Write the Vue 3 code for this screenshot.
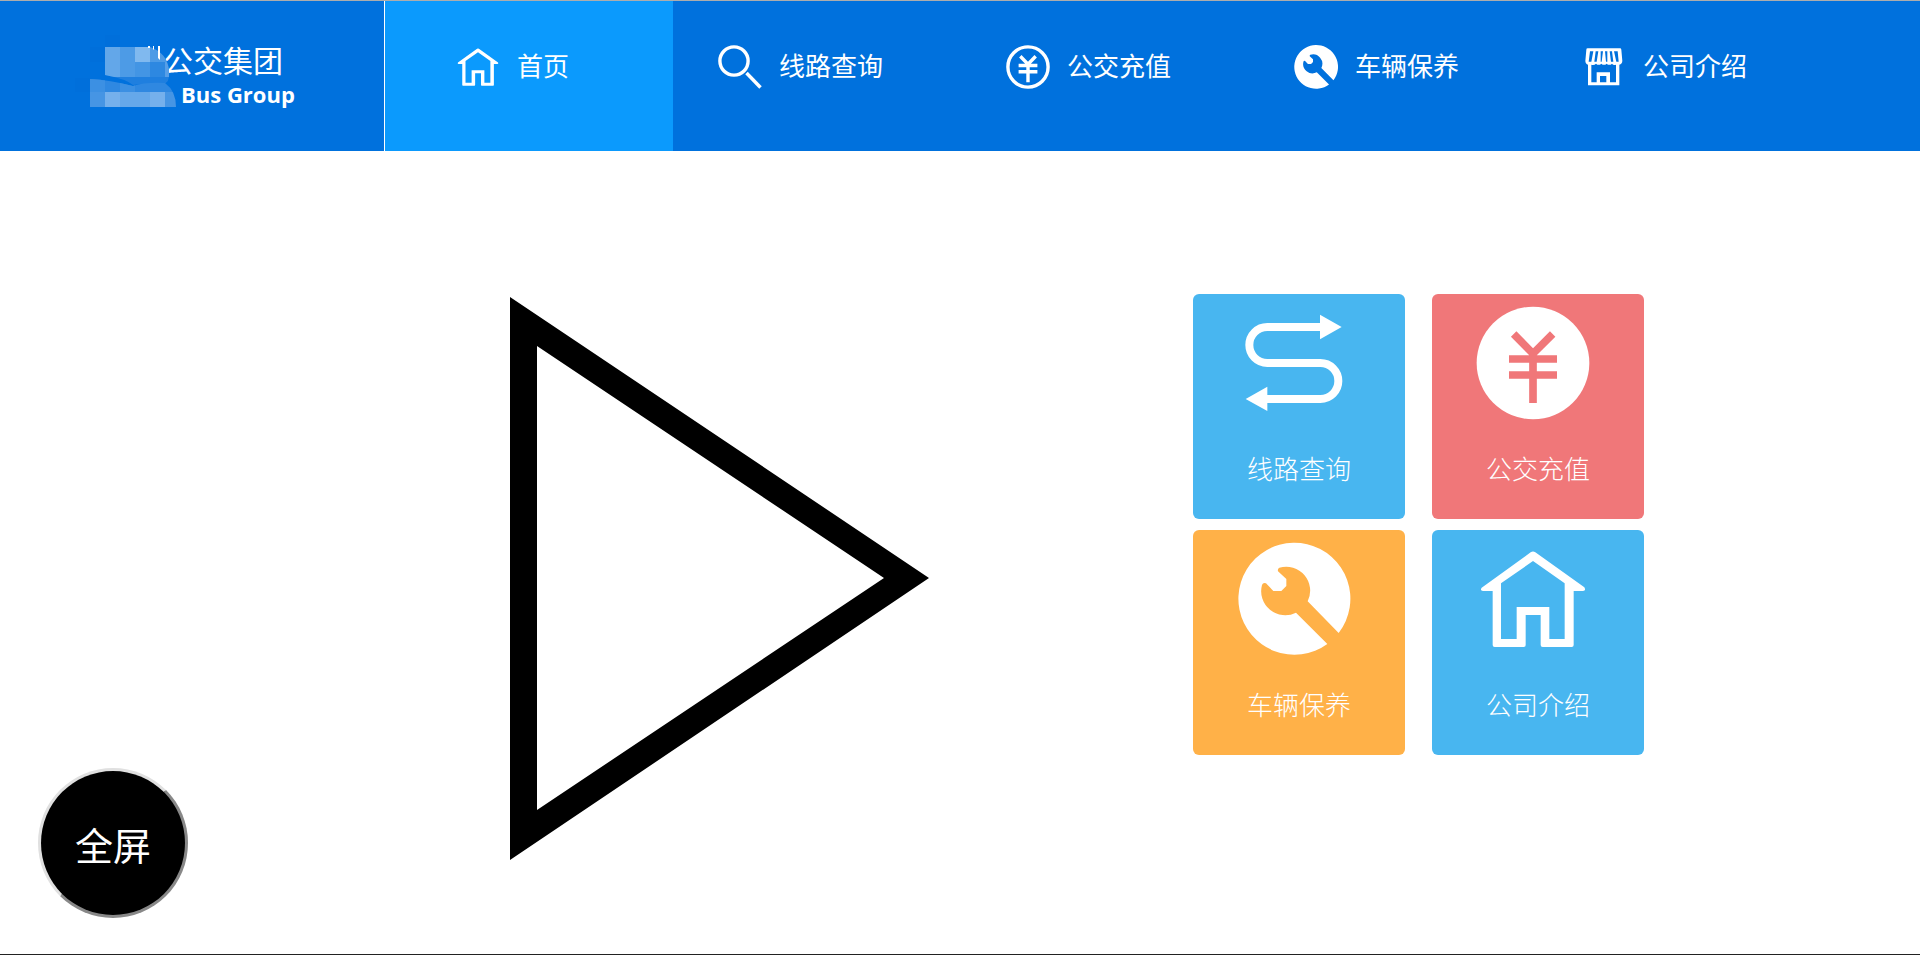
<script setup>
import { ref } from 'vue'

const active = ref('home')

const navItems = [
  { id: 'home', label: '首页' },
  { id: 'search', label: '线路查询' },
  { id: 'pay', label: '公交充值' },
  { id: 'repair', label: '车辆保养' },
  { id: 'company', label: '公司介绍' },
]

const cards = [
  { id: 'route', label: '线路查询', tone: 'blue' },
  { id: 'pay', label: '公交充值', tone: 'red' },
  { id: 'repair', label: '车辆保养', tone: 'orange' },
  { id: 'home', label: '公司介绍', tone: 'blue' },
]

const housePath =
  'M362 97Q369 92 376 97L523 202Q529 212 519 213H491V375Q491 381 485 381H398Q392 381 392 375V285H347V375Q347 381 341 381H254Q248 381 248 375V213H219Q209 212 215 203ZM369 123L273 190V357H320V261H418V357H464V190Z'
const wrenchPath =
  'M477 339A168 168 0 1 0 443 372L349 278A72 72 0 0 1 247 195Q250 187 259 190L281 213H305L320 198V177L295 154Q293 146 299 143A72 72 0 0 1 384 244Z'

function toggleFullscreen() {
  if (document.fullscreenElement) document.exitFullscreen()
  else document.documentElement.requestFullscreen()
}
</script>

<template>
  <div class="page">
    <header class="header">
      <div class="brand">
        <span class="brand-cn">公交集团</span>
        <span class="brand-en">Bus Group</span>
        <svg class="brand-mark" viewBox="75 35 105 75" aria-hidden="true">
          <defs>
            <clipPath id="mark-top">
              <path d="M105 47H150Q167 53 169 70V77Q168 85 158 85Q145 83 133 85Q126 79 105 75Z" />
            </clipPath>
            <clipPath id="mark-bottom">
              <path d="M90 79Q110 80 133 86Q145 82 165 83Q176 91 176 107H90Z" />
            </clipPath>
          </defs>
          <g fill="#006fdb">
            <path d="M105 35h15v12h-15zM90 47h15v15H90zM75 78h15v14H75z" />
          </g>
          <g clip-path="url(#mark-top)">
            <path fill="#1f7fdf" d="M105 47h66v40h-66z" />
            <path fill="#63a7e9" d="M105 47h15v30h-15z" />
            <path fill="#4d9be6" d="M120 47h15v30h-15zM150 47h20v15h-20z" />
            <path fill="#80b9ef" d="M135 47h15v15h-15z" />
            <path fill="#4395e4" d="M135 62h15v15h-15z" />
            <path fill="#2d88e1" d="M150 62h15v15h-15z" />
            <path fill="#589fe7" d="M165 62h5v15h-5z" />
          </g>
          <g clip-path="url(#mark-bottom)">
            <path fill="#2f88e1" d="M90 79h86v13H90z" />
            <path fill="#3c90e3" d="M90 79h15v13H90zM120 79h15v13h-15z" />
            <path fill="#4695e4" d="M90 92h15v15H90zM165 92h12v15h-12z" />
            <path fill="#75b0ec" d="M105 92h15v15h-15zM150 92h15v15h-15z" />
            <path fill="#65a8ea" d="M120 92h30v15h-30z" />
          </g>
          <path fill="#fff" d="M158 46h2v14l-2-2zM148 46h2v2h-2zM153 46h1v4l-1-1z" />
        </svg>
      </div>

      <nav class="nav">
        <a
          v-for="item in navItems"
          :key="item.id"
          href="#"
          class="nav-item"
          :class="{ active: active === item.id }"
          @click.prevent="active = item.id"
        >
          <svg v-if="item.id === 'home'" class="nav-icon" viewBox="177 45 384 384" aria-hidden="true">
            <path fill="currentColor" fill-rule="evenodd" :d="housePath" />
          </svg>
          <svg v-else-if="item.id === 'search'" class="nav-icon" viewBox="0 0 50 50" aria-hidden="true">
            <g fill="none" stroke="currentColor" stroke-width="3.4">
              <circle cx="19" cy="19" r="14.1" />
              <path d="M31.500 31L45.500 45.500" />
            </g>
          </svg>
          <svg v-else-if="item.id === 'pay'" class="nav-icon" viewBox="0 0 50 50" aria-hidden="true">
            <g fill="none" stroke="currentColor" stroke-width="3.4">
              <circle cx="25" cy="25" r="20.100" />
              <path d="M17.3 14.3L25 22.2L32.7 14.3M15.6 23.500H34.4M15.6 29.7H34.4M25 21.500V40.3" />
            </g>
          </svg>
          <svg v-else-if="item.id === 'repair'" class="nav-icon" viewBox="151 45 384 384" aria-hidden="true">
            <path fill="currentColor" :d="wrenchPath" />
          </svg>
          <svg v-else class="nav-icon" viewBox="238 125 150 150" aria-hidden="true">
            <path
              fill="currentColor"
              fill-rule="evenodd"
              d="M264 144H361Q365 144 365 148L368 182Q367 192 359 193V255H265V193Q258 192 257 182L260 148Q260 144 264 144ZM271 153L267 184H275L281 153ZM288 153L284 184H291L296 153ZM303 153V184H306L310 153ZM316 153L319 184H323V153ZM330 153L334 184H341L337 153ZM343 153L350 184H357L354 153ZM275 193V246H291V216H331V246H349V193Q341 196 337 190Q329 197 321 190Q313 197 305 190Q297 197 289 190Q283 196 275 193ZM301 227V246H320V227Z"
            />
          </svg>
          <span>{{ item.label }}</span>
        </a>
      </nav>
    </header>

    <main class="main">
      <button type="button" class="play" aria-label="播放">
        <svg viewBox="0 0 419 563" aria-hidden="true">
          <path fill="#000" fill-rule="evenodd" d="M0 0L419 281L0 563ZM27 49V513L374 281Z" />
        </svg>
      </button>

      <section class="cards">
        <a v-for="card in cards" :key="card.label" href="#" class="card" :class="card.tone">
          <svg v-if="card.id === 'route'" class="card-icon" viewBox="151 57 384 384" aria-hidden="true">
            <path
              fill="none"
              stroke="currentColor"
              stroke-width="24"
              d="M424 141H263A54 54 0 0 0 263 249H422A54 54 0 0 1 422 357H260"
            />
            <path fill="currentColor" d="M421 104L486 141L421 178ZM263 320L198 357L263 393Z" />
          </svg>
          <svg v-else-if="card.id === 'pay'" class="card-icon" viewBox="177 57 384 384" aria-hidden="true">
            <circle cx="369" cy="249" r="169" fill="currentColor" />
            <path
              fill="none"
              stroke="#f07779"
              stroke-width="23"
              d="M311 162L369 221L428 162M297 237H441M297 285H441M369 218V369"
            />
          </svg>
          <svg v-else-if="card.id === 'repair'" class="card-icon" viewBox="151 45 384 384" aria-hidden="true">
            <path fill="currentColor" :d="wrenchPath" />
          </svg>
          <svg v-else class="card-icon" viewBox="177 45 384 384" aria-hidden="true">
            <path fill="currentColor" fill-rule="evenodd" :d="housePath" />
          </svg>
          <span class="card-label">{{ card.label }}</span>
        </a>
      </section>
    </main>

    <button type="button" class="fullscreen" @click="toggleFullscreen">全屏</button>
  </div>
</template>

<style>
body {
  margin: 0;
  background: #fff;
}
</style>

<style scoped>
.page {
  box-sizing: border-box;
  min-height: 100vh;
  border-top: 1px solid #adadad;
  border-bottom: 1px solid #222;
  font-family: "Noto Sans", "Noto Sans CJK SC", sans-serif;
}

.header {
  display: flex;
  height: 150px;
  background: #0071dd;
  color: #fff;
}

.brand {
  box-sizing: border-box;
  position: relative;
  display: flex;
  flex-direction: column;
  width: 20%;
  padding: 43px 0 0 163px;
}

.brand-cn {
  font-size: 30px;
  line-height: 34px;
}

.brand-en {
  padding-left: 18px;
  font-family: "Open Sans", "Noto Sans", sans-serif;
  font-size: 22px;
  font-weight: 700;
  line-height: 32px;
}

.brand-mark {
  position: absolute;
  top: 34px;
  left: 75px;
  width: 105px;
  height: 75px;
}

.nav {
  display: flex;
  flex: 1;
  border-left: 1px solid #fff;
}

.nav-item {
  box-sizing: border-box;
  display: flex;
  align-items: flex-start;
  justify-content: center;
  gap: 14px;
  width: 288px;
  padding: 41px 36px 0 0;
  color: #fff;
  font-size: 26px;
  line-height: 48px;
  text-decoration: none;
  white-space: nowrap;
}

.nav-item.active {
  background: #0b9afd;
}

.nav-icon {
  flex: none;
  width: 50px;
  height: 50px;
}

.main {
  display: flex;
  align-items: flex-start;
  justify-content: flex-end;
  gap: 264px;
  padding: 143px 276px 0 0;
}

.play {
  width: 419px;
  margin-top: 3px;
  padding: 0;
  border: 0;
  background: none;
  cursor: pointer;
}

.play svg {
  display: block;
  width: 100%;
}

.cards {
  display: grid;
  grid-template-columns: 1fr 1fr;
  gap: 11px 27px;
  width: 451px;
}

.card {
  box-sizing: border-box;
  display: flex;
  flex-direction: column;
  align-items: center;
  height: 225px;
  padding-top: 5px;
  border-radius: 6px;
  color: #fff;
  text-decoration: none;
}

.blue {
  background: #48b6f0;
}

.red {
  background: #f07779;
}

.orange {
  background: #ffb148;
}

.card-icon {
  width: 128px;
  height: 128px;
  margin-right: 10px;
}

.card-label {
  margin-top: 22px;
  font-size: 26px;
  font-weight: 300;
  line-height: 40px;
}

.fullscreen {
  position: fixed;
  bottom: 37px;
  left: 38px;
  width: 150px;
  height: 150px;
  padding: 0;
  border: 3px solid;
  border-color: #e0e0e0 #888 #888 #e0e0e0;
  border-radius: 50%;
  background: #000;
  color: #fff;
  font-family: "Noto Sans", "Noto Sans CJK SC", sans-serif;
  font-size: 38px;
  cursor: pointer;
}
</style>
